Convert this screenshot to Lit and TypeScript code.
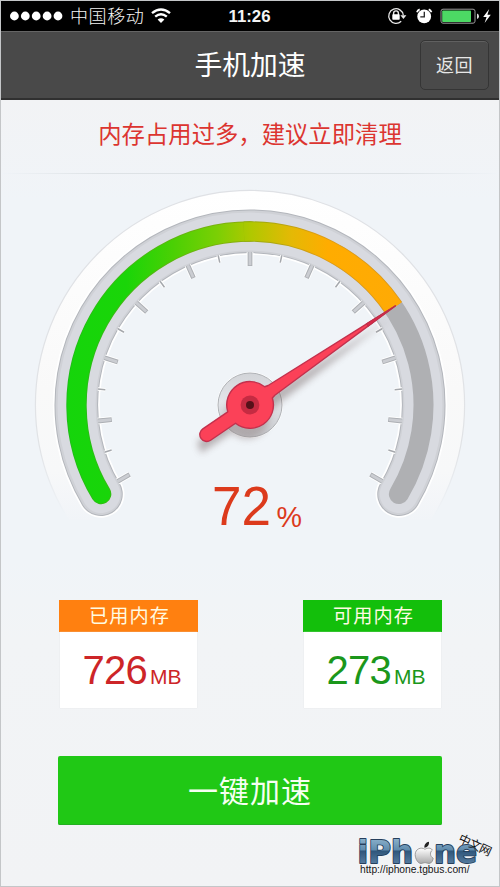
import { LitElement, html, svg, css } from "lit";
import { customElement } from "lit/decorators.js";

const CX = 250;
const CY = 230;

/** Point on a circle around the dial centre; 0 degrees is right, positive is clockwise. */
const at = (r: number, deg: number): [number, number] => {
  const a = (deg * Math.PI) / 180;
  return [CX + r * Math.cos(a), CY + r * Math.sin(a)];
};
const arc = (r: number, from: number, to: number) => {
  const [x1, y1] = at(r, from);
  const [x2, y2] = at(r, to);
  const large = to - from > 180 ? 1 : 0;
  return `M${x1.toFixed(2)} ${y1.toFixed(2)}A${r} ${r} 0 ${large} 1 ${x2.toFixed(2)} ${y2.toFixed(2)}`;
};

const START = 149.1;
const END = 390.9;

@customElement("status-bar")
class StatusBar extends LitElement {
  static styles = css`
    :host { display: flex; align-items: center; height: 30px; background: #000; color: #f4f4f4; }
    svg { display: block; flex: none; }
    .side { flex: 1; display: flex; align-items: center; height: 30px; }
    .left { padding-left: 8px; }
    .carrier { font: 18px/28px "Noto Sans CJK SC", sans-serif; font-weight: 300; height: 30px; letter-spacing: 0.6px; margin-left: 7px; white-space: nowrap; }
    .wifi { margin-left: 7px; }
    .time { font: bold 16.8px/31px "Liberation Sans", sans-serif; margin-right: 2px; }
    .right { justify-content: flex-end; padding-right: 7px; }
  `;
  render() {
    return html`
      <div class="side left">
        <svg width="54" height="30" fill="#fff">
          ${[0, 1, 2, 3, 4].map((i) => svg`<circle cx=${5.4 + i * 10.9} cy="15" r="4.4" />`)}
        </svg>
        <span class="carrier">中国移动</span>
        <svg class="wifi" width="20" height="30" fill="none" stroke="#fff" stroke-width="2.4">
          <path d="M1 12.2Q10 4.6 19 12.2" />
          <path d="M4.2 15.6Q10 10.8 15.8 15.6" />
          <path d="M10 22L6.6 18.4Q10 15.9 13.4 18.4Z" fill="#fff" stroke="none" />
        </svg>
      </div>
      <span class="time">11:26</span>
      <div class="side right">
        <svg width="106" height="30" viewBox="386 1 106 30">
          <g fill="none" stroke="#e8e8e8" stroke-width="1.3">
            <path d="M403.3 15.2A7.3 7.3 0 1 0 401.2 21.2" />
            <path d="M393.6 15V13.2Q393.6 10.9 396 10.9T398.4 13.2V15" stroke-width="1.4" />
          </g>
          <path d="M400.4 15.2h6l-3 3.8z" fill="#e8e8e8" />
          <rect x="392.3" y="14.2" width="7.4" height="5.6" rx=".7" fill="#fff" />
          <circle cx="424.2" cy="16.4" r="6.9" fill="#fff" />
          <path d="M416.9 12.2Q417.6 10.2 419.7 9.4M431.5 12.2Q430.8 10.2 428.7 9.4" fill="none" stroke="#fff" stroke-width="1.7" />
          <path d="M424.3 11.8V16.9H420.3" fill="none" stroke="#222" stroke-width="1.3" />
          <rect x="441" y="9.2" width="34" height="14" rx="2" fill="none" stroke="#9c9c9c" />
          <rect x="442.2" y="10.4" width="28.8" height="11.7" rx=".8" fill="#4cd964" />
          <path d="M477 13.4Q479 14 479 16.2T477 19z" fill="#ddd" />
          <path d="M489.2 9L483.2 17.1h3.4l-2 5.8 6.2-8.1h-3.4z" fill="#fff" />
        </svg>
      </div>`;
  }
}

@customElement("memory-gauge")
class MemoryGauge extends LitElement {
  static properties = { percent: { type: Number } };
  declare percent: number;
  static styles = css`
    :host { display: block; height: 360px; }
    svg { display: block; }
    .num { font-family: "Liberation Sans", sans-serif; fill: #dc3a1c; }
  `;
  private tick(deg: number, major: boolean) {
    const [x1, y1] = at(153, deg);
    const [x2, y2] = at(major ? 139 : 145.5, deg);
    const [x3, y3] = at(139.8, deg);
    return major
      ? svg`<line x1=${x1} y1=${y1} x2=${x2} y2=${y2} stroke="#fff" stroke-width="6.6" />
            <line x1=${x1} y1=${y1} x2=${x2} y2=${y2} stroke="#adb0b5" stroke-width="4.8" />
            <line x1=${x1} y1=${y1} x2=${x3} y2=${y3} stroke="#cbcdd2" stroke-width="2.8" />`
      : svg`<line x1=${x1} y1=${y1} x2=${x2} y2=${y2} stroke="#fff" stroke-width="3.4" />
            <line x1=${x1} y1=${y1} x2=${x2} y2=${y2} stroke="#a5a8ad" stroke-width="1.5" />`;
  }
  render() {
    const split = 325.9;
    const ticks = Array.from({ length: 21 }, (_, i) => 150 + i * 12);
    return html`
      <svg width="500" height="370" viewBox="0 0 500 370">
        <defs>
          <linearGradient id="rim" gradientUnits="userSpaceOnUse" x1="0" y1="16" x2="0" y2="346">
            <stop offset="0" stop-color="#fff" />
            <stop offset=".6" stop-color="#f9f9f9" />
            <stop offset=".85" stop-color="#f7f8f9" />
            <stop offset="1" stop-color="#f1f4f8" />
          </linearGradient>
          <linearGradient id="rimEdge" gradientUnits="userSpaceOnUse" x1="0" y1="16" x2="0" y2="340">
            <stop offset="0" stop-color="#dfe1e5" />
            <stop offset=".8" stop-color="#e1e3e6" />
            <stop offset="1" stop-color="#f0f4f8" />
          </linearGradient>
          <linearGradient id="fill" gradientUnits="userSpaceOnUse" x1="66" y1="0" x2="402" y2="0">
            <stop offset="0" stop-color="#15d50b" />
            <stop offset=".18" stop-color="#1ad508" />
            <stop offset=".32" stop-color="#4bd004" />
            <stop offset=".45" stop-color="#7bcf04" />
            <stop offset=".55" stop-color="#b0c800" />
            <stop offset=".67" stop-color="#e4b905" />
            <stop offset=".78" stop-color="#ffac00" />
            <stop offset="1" stop-color="#ffaa05" />
          </linearGradient>
          <linearGradient id="edge" gradientUnits="userSpaceOnUse" x1="66" y1="0" x2="402" y2="0">
            <stop offset="0" stop-color="#1dbc18" />
            <stop offset=".5" stop-color="#84b00b" />
            <stop offset=".75" stop-color="#dd9c14" />
            <stop offset="1" stop-color="#e09b18" />
          </linearGradient>
          <linearGradient id="hub" x1="0" y1="0" x2="0" y2="1">
            <stop offset="0" stop-color="#d2d4d8" />
            <stop offset=".45" stop-color="#e4e6ea" />
            <stop offset="1" stop-color="#c6c8cc" />
          </linearGradient>
          <clipPath id="top"><rect width="500" height="345" /></clipPath>
          <filter id="soft" x="-20%" y="-20%" width="140%" height="140%"><feGaussianBlur stdDeviation="3.6" /></filter>
        </defs>

        <g fill="none">
          <g clip-path="url(#top)">
            <circle cx="250" cy="230" r="204.5" stroke="url(#rim)" stroke-width="20" />
            <circle cx="250" cy="230" r="214.6" stroke="url(#rimEdge)" stroke-width="1.2" />
          </g>
          <g stroke-linecap="round">
            <path d=${arc(173.7, START, END)} stroke="#fff" stroke-width="47" />
            <path d=${arc(173.7, START, END)} stroke="#b3b6bc" stroke-width="43.6" />
            <path d=${arc(173.7, START, END)} stroke="#cfd1d6" stroke-width="41.6" />
            <path d=${arc(173.4, START, END)} stroke="#d8dae0" stroke-width="38" />
          </g>
          ${ticks.map((d, i) => this.tick(d, i % 2 === 0))}
          <g stroke-linecap="round">
            <path d=${arc(173.5, 300, END)} stroke="#afb0b3" stroke-width="20" />
            <path d=${arc(173.5, START, 270)} stroke="url(#edge)" stroke-width="20.4" />
            <path d=${arc(173.5, START, 270)} stroke="url(#fill)" stroke-width="18.6" />
          </g>
          <path d=${arc(173.5, 268, split)} stroke="url(#edge)" stroke-width="20.4" />
          <path d=${arc(173.5, 268, split)} stroke="url(#fill)" stroke-width="18.6" />
        </g>

        <circle cx="250" cy="230" r="33" fill="#fff" />
        <circle cx="250" cy="230" r="32" fill="url(#hub)" stroke="#afb2b6" />
        <g filter="url(#soft)" opacity=".42" transform="translate(-5 12)">
          <path d="M202 255L247 225L394 132L276 222L254 234L206 266Z" fill="#655" />
          <circle cx="252" cy="230" r="22" fill="#877" />
        </g>
        <g transform="rotate(-34.3 250 230)">
          <path d="M426 230L276 224.1L272.4 223.2A23.3 23.3 0 0 0 227.8 223.1H197.6A6.9 6.9 0 0 0 197.6 236.9H227.8A23.3 23.3 0 0 0 272.4 236.8L276 235.9Z"
            fill="#fb4158" stroke="#c3314d" stroke-width="1.4" stroke-linejoin="round" />
          <path d="M426 230L392 228.4V231.6Z" fill="#d62b4a" stroke="#b9304a" stroke-width=".8" />
        </g>
        <circle cx="250" cy="230" r="9.4" fill="#c52b42" />
        <circle cx="250" cy="230" r="4" fill="#551119" />

        <text class="num" x="212" y="350" font-size="55" textLength="59" lengthAdjust="spacingAndGlyphs">${this.percent}</text>
        <text class="num" x="276.5" y="352" font-size="29" textLength="25.5" lengthAdjust="spacingAndGlyphs">%</text>
      </svg>`;
  }
}

@customElement("memory-card")
class MemoryCard extends LitElement {
  static properties = { label: {}, amount: {} };
  declare label: string;
  declare amount: string;
  static styles = css`
    :host { display: block; width: 139px; }
    .head { height: 32px; background: var(--tone); color: #fffbe2; text-align: center; font: 19.2px/31px "Noto Sans CJK SC", sans-serif; letter-spacing: 1.1px; text-indent: 2px; }
    .body { height: 76px; margin: 0 1px; background: #fff; box-shadow: 0 0 1px #d9dde0; display: flex; justify-content: center; align-items: baseline; color: var(--ink); font-family: "Liberation Sans", sans-serif; padding-left: 7px; box-sizing: border-box; }
    .value { font-size: 40px; line-height: 76px; letter-spacing: -0.8px; }
    .unit { font-size: 21px; margin-left: 3px; }
  `;
  render() {
    return html`<div class="head">${this.label}</div>
      <div class="body"><span class="value">${this.amount}</span><span class="unit">MB</span></div>`;
  }
}

@customElement("site-mark")
class SiteMark extends LitElement {
  static styles = css`
    :host { display: block; }
    svg { display: block; }
    .word { font: bold 32px "DejaVu Sans", sans-serif; stroke-linejoin: round; paint-order: stroke; }
    .url { font: 11px "Liberation Sans", sans-serif; fill: #151515; }
    .cn { font: 12px "Noto Sans CJK SC", sans-serif; fill: #111; }
  `;
  render() {
    return html`
      <svg width="140" height="52" viewBox="356 830 140 52">
        <defs>
          <linearGradient id="steel" gradientUnits="userSpaceOnUse" x1="0" y1="839" x2="0" y2="865">
            <stop offset="0" stop-color="#8db3cc" />
            <stop offset=".46" stop-color="#5f8bad" />
            <stop offset=".5" stop-color="#2f567b" />
            <stop offset="1" stop-color="#567ca0" />
          </linearGradient>
          <linearGradient id="silver" x1="0" y1="0" x2="0" y2="1">
            <stop offset="0" stop-color="#fff" />
            <stop offset="1" stop-color="#a9a9a9" />
          </linearGradient>
        </defs>
        <g class="word" fill="url(#steel)" stroke="#263f5c" stroke-width="1.8">
          <text x="357.5" y="863.5" textLength="55.5" lengthAdjust="spacingAndGlyphs">iPh</text>
          <text x="434" y="863.5" textLength="43" lengthAdjust="spacingAndGlyphs">ne</text>
        </g>
        <path d="M425 850.3C421 847.5 415.2 850.1 415.2 855.5C415.2 859.9 418 864.5 421 864.5C422.8 864.5 423.4 863.6 425 863.6S427.4 864.5 429 864.5C431.4 864.5 433 861.5 433.2 859.2C429.8 857.5 429.6 853 432.4 851.1C430.6 848.3 427.2 848.9 425 850.3Z" fill="url(#silver)" stroke="#8a8a8a" stroke-width=".8" />
        <path d="M424.4 848.7C424 845.5 426.2 842.9 429 842.7C429.4 845.9 427.3 848.5 424.4 848.7Z" fill="#222" />
        <text class="cn" transform="translate(457.5 842.5) rotate(25)" textLength="35">中文网</text>
        <text class="url" x="360" y="874" textLength="109.5" lengthAdjust="spacingAndGlyphs">http://iphone.tgbus.com/</text>
      </svg>`;
  }
}

@customElement("app-root")
class AppRoot extends LitElement {
  static styles = css`
    :host { display: flex; flex-direction: column; box-sizing: border-box; width: 500px; height: 887px; overflow: hidden; border: 1px solid #c4c6c8; background: linear-gradient(#f2f3f5 99px, #f0f4f8 200px, #f0f4f8 560px, #f2f4f6 640px, #f2f3f5); font-family: "Noto Sans CJK SC", sans-serif; }
    status-bar { flex: none; }
    .nav { flex: none; height: 69px; box-sizing: border-box; background: #494949; border-top: 1px solid #656565; border-bottom: 2px solid #303030; display: grid; grid-template-columns: 1fr auto 1fr; align-items: center; }
    .title { grid-column: 2; color: #fff; font-size: 27.8px; line-height: 62px; height: 66px; }
    .back { justify-self: end; width: 69px; height: 50px; margin-right: 10px; box-sizing: border-box; border: 1px solid #353535; border-radius: 5px; background: #4a4a4a; box-shadow: inset 0 1px #606060; color: #e7e7e7; font: 18px/46px "Noto Sans CJK SC", sans-serif; text-align: center; letter-spacing: .5px; padding: 0 0 2px; }
    .notice { flex: none; height: 74px; box-sizing: border-box; border-bottom: 1px solid #e0e5e8; border-image: linear-gradient(90deg, #f0f4f8, #dde2e5 20%, #dde2e5 80%, #f0f4f8) 1; color: #dc3530; text-align: center; font-size: 23.35px; line-height: 66px; }
    memory-gauge { flex: none; margin: 1px 0 0 -1px; }
    .cards { flex: none; display: flex; justify-content: space-between; padding: 65px 57px 0 58px; }
    .used { --tone: #ff8010; --ink: #cd2528; }
    .free { --tone: #13bf0b; --ink: #1b971b; }
    .boost { flex: none; width: 384px; height: 69px; margin: 48px 0 0 57px; border: 0; border-radius: 2px; background: #20c815; color: #f6fff2; font: 30px/66px "Noto Sans CJK SC", sans-serif; letter-spacing: 1px; padding: 0 0 3px; box-shadow: inset 0 -1px #24af22; }
    site-mark { align-self: flex-end; margin: 4px 3px 0 0; }
  `;
  render() {
    return html`
      <status-bar></status-bar>
      <div class="nav"><span class="title">手机加速</span><button class="back">返回</button></div>
      <div class="notice">内存占用过多，建议立即清理</div>
      <memory-gauge .percent=${72}></memory-gauge>
      <div class="cards">
        <memory-card class="used" label="已用内存" amount="726"></memory-card>
        <memory-card class="free" label="可用内存" amount="273"></memory-card>
      </div>
      <button class="boost">一键加速</button>
      <site-mark></site-mark>`;
  }
}
